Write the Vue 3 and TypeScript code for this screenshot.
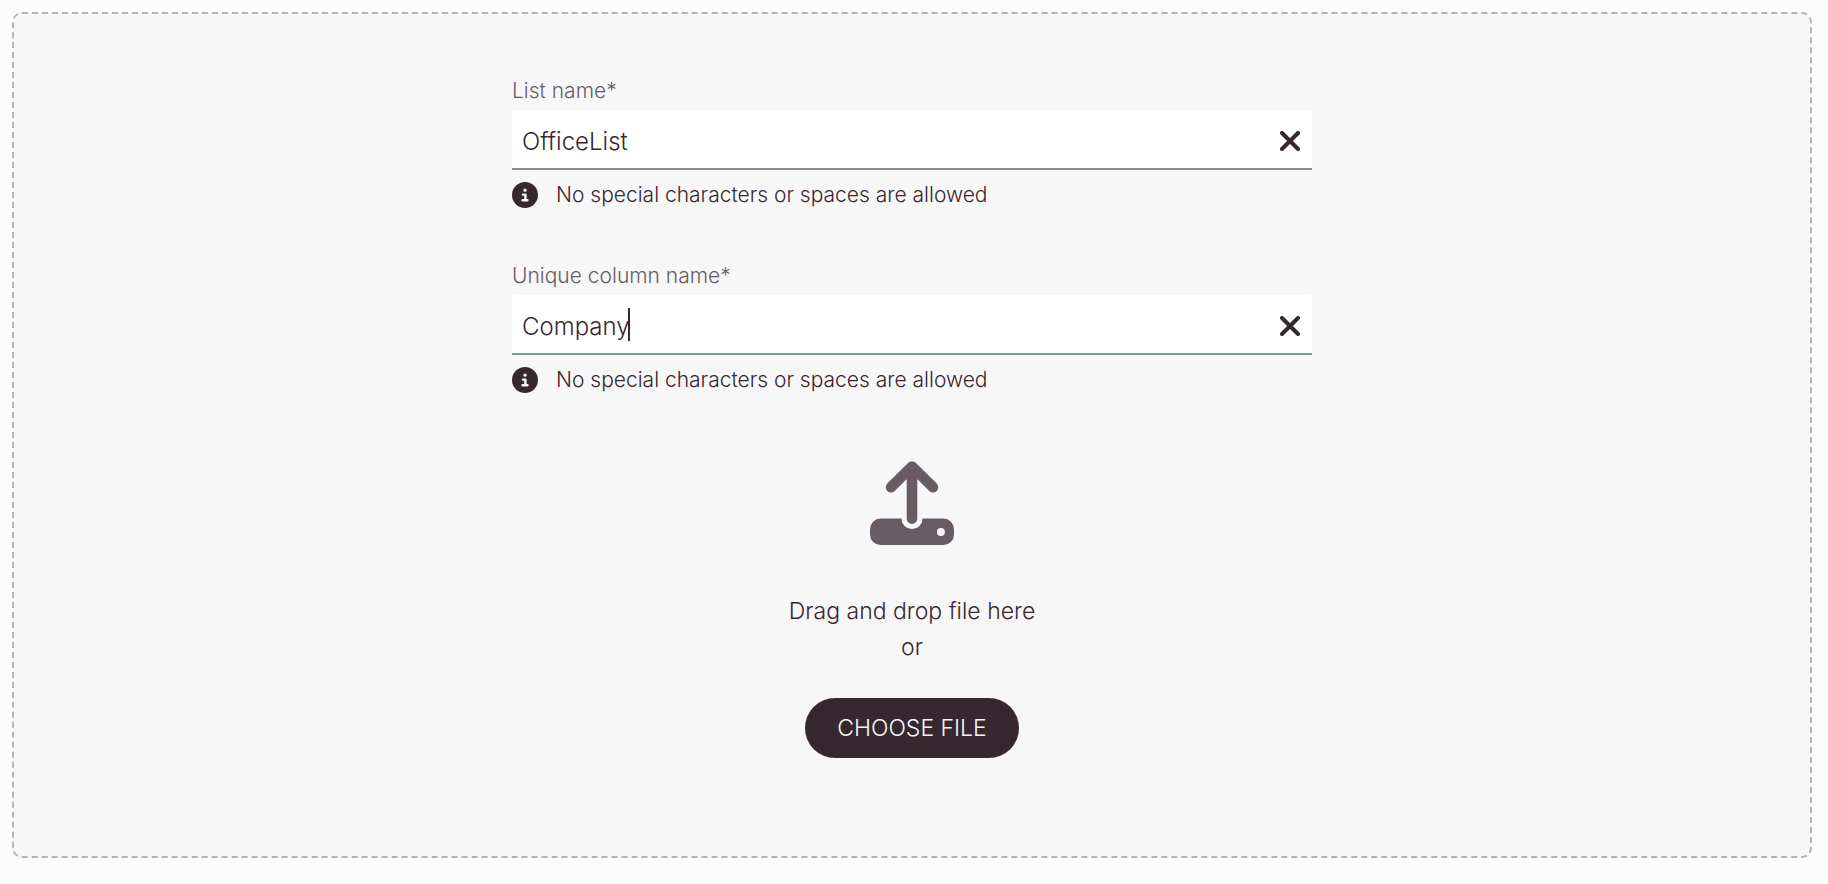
<script setup lang="ts">
import { ref } from 'vue'

interface Field {
  id: string
  label: string
  value: string
  active: boolean
}

const hint = 'No special characters or spaces are allowed'

const fields = ref<Field[]>([
  { id: 'list-name', label: 'List name*', value: 'OfficeList', active: false },
  { id: 'unique-column', label: 'Unique column name*', value: 'Company', active: true },
])

const picker = ref<HTMLInputElement | null>(null)

function activate(field: Field) {
  fields.value.forEach((f) => (f.active = f.id === field.id))
}
</script>

<template>
  <main class="page">
    <section class="dropzone">
      <form class="form" @submit.prevent>
        <div v-for="field in fields" :key="field.id" class="field">
          <label class="label" :for="field.id">{{ field.label }}</label>
          <div class="control" :class="{ active: field.active }">
            <div class="entry">
              <input
                :id="field.id"
                v-model="field.value"
                class="input"
                type="text"
                autocomplete="off"
                spellcheck="false"
                :aria-describedby="field.id + '-hint'"
                @focus="activate(field)"
              />
              <span v-if="field.active" class="caret"></span>
            </div>
            <button class="clear" type="button" :aria-label="'Clear ' + field.label" @click="field.value = ''">
              <svg viewBox="0 0 20 20" width="20" height="20" aria-hidden="true">
                <path d="M2 2 18 18M18 2 2 18" fill="none" stroke="currentColor" stroke-width="4" stroke-linecap="round" />
              </svg>
            </button>
          </div>
          <p :id="field.id + '-hint'" class="hint">
            <svg class="info" viewBox="0 0 512 512" width="26" height="26" aria-hidden="true">
              <circle cx="256" cy="256" r="256" fill="currentColor" />
              <circle cx="256" cy="160" r="32" fill="#f7f7f7" />
              <path d="M216 248h48v112M208 360h96" fill="none" stroke="#f7f7f7" stroke-width="48" stroke-linecap="round" stroke-linejoin="round" />
            </svg>
            <span>{{ hint }}</span>
          </p>
        </div>
      </form>

      <svg class="upload" viewBox="0 0 84 84" width="84" height="84" aria-hidden="true">
        <path
          d="M10.5 57.6H31.5A10.5 10.5 0 0 0 52.5 57.6H73.5A10.5 10.5 0 0 1 84 68.1V73.5A10.5 10.5 0 0 1 73.5 84H10.5A10.5 10.5 0 0 1 0 73.5V68.1A10.5 10.5 0 0 1 10.5 57.6ZM70.9 66.9A4 4 0 1 0 70.9 74.9A4 4 0 1 0 70.9 66.9Z"
          fill="currentColor"
          fill-rule="evenodd"
        />
        <path d="M42 57.6V6M21 26.3 42 5.5 63 26.3" fill="none" stroke="currentColor" stroke-width="10.6" stroke-linecap="round" stroke-linejoin="round" />
      </svg>

      <p class="prompt">Drag and drop file here<br />or</p>

      <button class="choose" type="button" @click="picker?.click()">CHOOSE FILE</button>
      <input ref="picker" type="file" hidden aria-label="File" />
    </section>
  </main>
</template>

<style>
body {
  margin: 0;
  background: #fcfcfc;
}
</style>

<style scoped>
.page {
  box-sizing: border-box;
  min-height: 100vh;
  padding: 12px 16px 26px 12px;
  display: flex;
  background: #fcfcfc;
  color: #372830;
  font-family: Inter, "Liberation Sans", sans-serif;
  font-size: 23px;
  font-weight: 300;
}

.dropzone {
  flex: 1;
  box-sizing: border-box;
  display: flex;
  flex-direction: column;
  align-items: center;
  padding: 62px 24px;
  border: 2px dashed #b8b0b4;
  border-radius: 10px;
  background: #f7f7f7;
}

.form {
  display: flex;
  flex-direction: column;
  gap: 53px;
  width: 100%;
  max-width: 800px;
}

.field {
  display: flex;
  flex-direction: column;
}

.label {
  margin-bottom: 4px;
  font-size: 21px;
  line-height: 30px;
  color: #685c64;
}

.control {
  display: flex;
  align-items: center;
  height: 58px;
  padding: 0 12px 0 10px;
  border-bottom: 2px solid #938a8f;
  border-radius: 4px 4px 0 0;
  background: #fff;
}

.control.active {
  border-bottom-color: #759e98;
}

.entry {
  flex: 1;
  display: flex;
  align-items: center;
  min-width: 0;
}

.input {
  flex: 1;
  box-sizing: border-box;
  min-width: 0;
  height: 56px;
  padding: 4px 0 0;
  border: 0;
  outline: 0;
  background: transparent;
  color: inherit;
  font: inherit;
  font-size: 24px;
}

.active .input {
  flex: none;
  max-width: 100%;
  field-sizing: content;
  caret-color: transparent;
}

.caret {
  width: 2px;
  height: 33px;
  margin-left: -2px;
  background: #372830;
}

.clear {
  display: flex;
  padding: 4px 0 0;
  border: 0;
  background: none;
  color: #372830;
  cursor: pointer;
}

.hint {
  display: flex;
  align-items: center;
  gap: 18px;
  margin: 12px 0 0;
  font-size: 21px;
  line-height: 26px;
}

.info {
  flex: none;
}

.upload {
  flex: none;
  margin-top: 68px;
  color: #685c64;
}

.prompt {
  margin: 48px 0 0;
  line-height: 36px;
  text-align: center;
}

.choose {
  min-width: 214px;
  height: 60px;
  margin-top: 33px;
  padding: 0 32px;
  border: 0;
  border-radius: 30px;
  background: #372830;
  color: #f7f7f7;
  font: inherit;
  cursor: pointer;
}
</style>
